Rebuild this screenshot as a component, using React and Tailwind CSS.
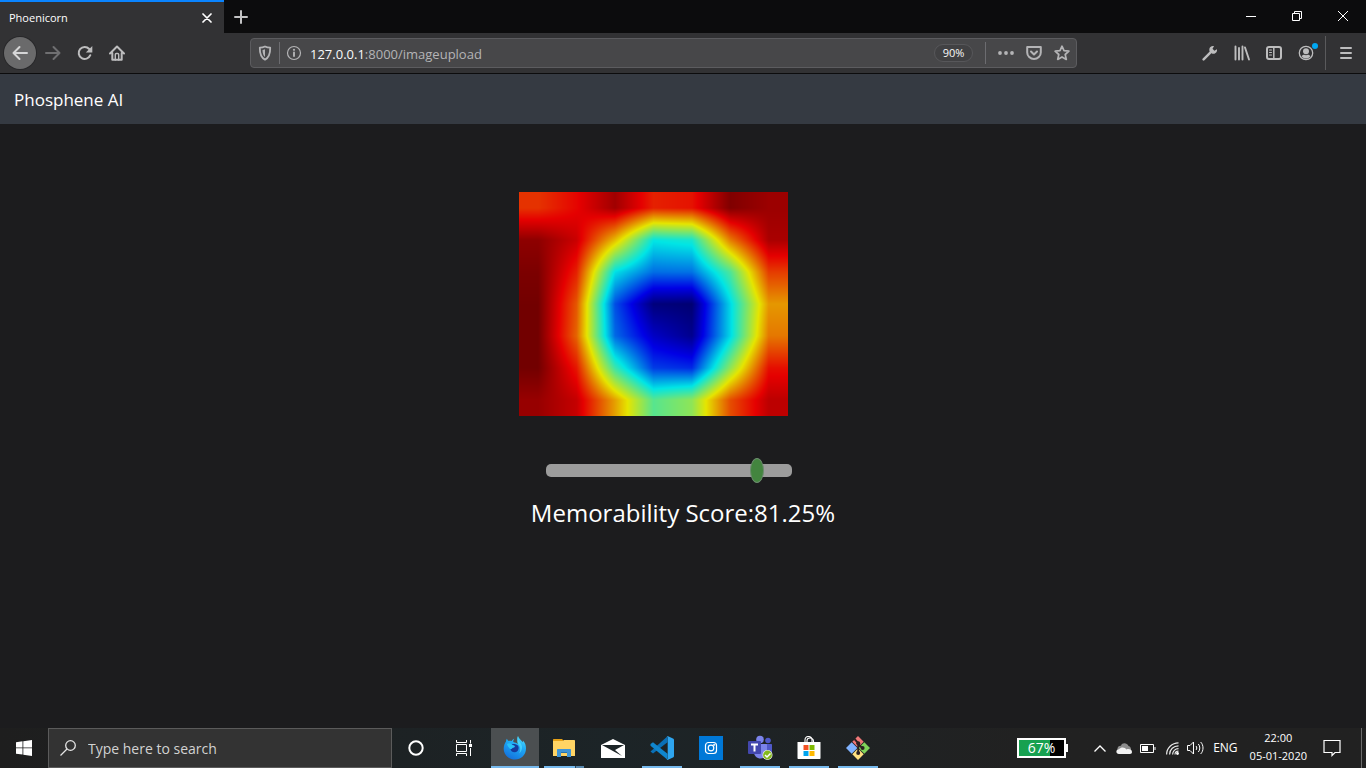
import { useEffect, useRef, useState } from "react";

const HEAT_GRID = [
  [0.82, 0.87, 0.95, 0.84, 0.855, 0.985, 0.955],
  [0.97, 0.905, 0.67, 0.38, 0.4, 0.74, 0.94],
  [0.99, 0.84, 0.37, 0.245, 0.25, 0.46, 0.81],
  [1, 0.78, 0.21, 0.01, 0, 0.36, 0.71],
  [1, 0.765, 0.24, 0.09, 0.03, 0.36, 0.745],
  [1, 0.85, 0.44, 0.19, 0.17, 0.53, 0.86],
  [0.96, 0.91, 0.7, 0.47, 0.53, 0.79, 0.92],
];

const clamp = (v, lo, hi) => Math.min(hi, Math.max(lo, v));

function jet(v) {
  const channel = (peak) => clamp(1.5 - Math.abs(4 * v - peak), 0, 1) * 229;
  return [channel(3), channel(2), channel(1)];
}

function Heatmap() {
  const ref = useRef(null);
  useEffect(() => {
    const canvas = ref.current;
    const ctx = canvas.getContext("2d");
    const { width, height } = canvas;
    const img = ctx.createImageData(width, height);
    for (let y = 0; y < height; y++) {
      const gy = clamp(((y + 0.5) * 7) / height - 0.5, 0, 6);
      const r = Math.min(5, Math.floor(gy));
      const fy = gy - r;
      for (let x = 0; x < width; x++) {
        const gx = clamp(((x + 0.5) * 7) / width - 0.5, 0, 6);
        const c = Math.min(5, Math.floor(gx));
        const fx = gx - c;
        const top = HEAT_GRID[r][c] * (1 - fx) + HEAT_GRID[r][c + 1] * fx;
        const bottom = HEAT_GRID[r + 1][c] * (1 - fx) + HEAT_GRID[r + 1][c + 1] * fx;
        const [R, G, B] = jet(top * (1 - fy) + bottom * fy);
        img.data.set([R, G, B, 255], (y * width + x) * 4);
      }
    }
    ctx.putImageData(img, 0, 0);
  }, []);
  return <canvas ref={ref} width={269} height={224} role="img" aria-label="Memorability heat map" className="block" />;
}

function Icon({ size = 16, children, className = "", box = 16, sw = 2 }) {
  return (
    <svg width={size} height={size} viewBox={`0 0 ${box} ${box}`} fill="none" stroke="currentColor" strokeWidth={sw} strokeLinecap="round" strokeLinejoin="round" className={`shrink-0 ${className}`} aria-hidden="true">
      {children}
    </svg>
  );
}

function ToolButton({ label, className = "", children }) {
  return (
    <button aria-label={label} className={`flex h-8 w-8 shrink-0 items-center justify-center ${className}`}>
      {children}
    </button>
  );
}

function TabStrip() {
  return (
    <div className="flex h-[33px] bg-[#0c0c0d] text-white">
      <div className="flex w-56 items-center justify-between border-t-2 border-[#0a84ff] bg-[#323234] pr-3 pl-[9px]">
        <span className="text-[11px] leading-4">Phoenicorn</span>
        <button aria-label="Close tab">
          <Icon size={10} box={10} sw={1.7}><path d="M1 1l8 8M9 1l-8 8" /></Icon>
        </button>
      </div>
      <button aria-label="New tab" className="flex w-[34px] items-center justify-center text-[#c3c3c4]">
        <Icon size={14} box={14}><path d="M7 1v12M1 7h12" /></Icon>
      </button>
      <div className="ml-auto flex pb-0.5">
        <button aria-label="Minimize" className="flex w-[46px] items-center justify-center">
          <svg width="10" height="10" stroke="currentColor"><path d="M0 5.5h10" /></svg>
        </button>
        <button aria-label="Restore" className="flex w-[46px] items-center justify-center">
          <svg width="10" height="10" fill="none" stroke="currentColor"><path d="M.5 2.5h7v7h-7zM2.500 2.500v-2h7v7h-2" /></svg>
        </button>
        <button aria-label="Close" className="flex w-[46px] items-center justify-center">
          <svg width="10" height="10" stroke="currentColor"><path d="M0 0l10 10M10 0L0 10" /></svg>
        </button>
      </div>
    </div>
  );
}

function AddressBar() {
  return (
    <div className="mx-[117px] flex h-[30px] min-w-0 flex-1 items-center rounded-sm border border-[#5c5c5f] bg-[#474749] text-[#b4b4b6]">
      <button aria-label="Tracking protection" className="flex w-7 shrink-0 justify-center">
        <Icon sw={1.8}>
          <path d="M8 1.500c1.800.9 3.500 1.200 5.200 1.200.1 5.500-.8 9.500-5.200 12C3.600 12.200 2.700 8.200 2.800 2.700c1.700 0 3.400-.3 5.200-1.200z" />
          <path d="M8 4.300c-.9.400-1.700.6-2.500.7.100 3.200.7 5.300 2.500 7z" fill="currentColor" stroke="none" />
        </Icon>
      </button>
      <span className="h-[22px] w-px bg-[#6c6c70]" />
      <button aria-label="Site information" className="flex w-7 shrink-0 justify-center">
        <Icon sw={1.2}>
          <circle cx="8" cy="8" r="6.5" />
          <path d="M8 7.500v3.500" strokeWidth="1.9" />
          <circle cx="8" cy="4.800" r="1.1" fill="currentColor" stroke="none" />
        </Icon>
      </button>
      <p className="ml-0.5 flex-1 truncate pt-0.5 text-[13px] leading-5"><span className="text-[#f9f9fa]">127.0.0.1</span>:8000/imageupload</p>
      <button className="h-[18px] w-[39px] rounded-full border border-[#57575a] bg-[#414143] text-[11px] leading-4 text-[#f9f9fa]">90%</button>
      <span className="ml-3 h-[22px] w-px bg-[#6c6c70]" />
      <button aria-label="Page actions" className="ml-1.5 flex w-7 justify-center">
        <Icon><g fill="currentColor" stroke="none"><circle cx="2" cy="8" r="1.9" /><circle cx="8" cy="8" r="1.9" /><circle cx="14" cy="8" r="1.9" /></g></Icon>
      </button>
      <button aria-label="Save to Pocket" className="flex w-7 justify-center">
        <Icon><path d="M1.200 2h13.600v5.500a6.800 6.500 0 0 1-13.600 0z" /><path d="M5 6.500l3 3 3-3" /></Icon>
      </button>
      <button aria-label="Bookmark this page" className="flex w-7 justify-center">
        <Icon sw={1.7}><path d="M8 1.200l2 4.500 4.900.5-3.700 3.300 1.100 4.900L8 11.900l-4.300 2.500 1.100-4.900L1.100 6.200 6 5.700z" /></Icon>
      </button>
    </div>
  );
}

function Toolbar() {
  return (
    <div className="flex h-[41px] items-center border-b border-[#0c0c0d] bg-[#323234] px-1 text-[#bdbdbe]">
      <ToolButton label="Back" className="rounded-full bg-[#6a6a6b] ring-1 ring-[#28282a] text-[#d6d6d7]">
        <Icon><path d="M15 8H1.500M7.500 2l-6 6 6 6" /></Icon>
      </ToolButton>
      <ToolButton label="Forward" className="ml-px text-[#6f6f71]">
        <Icon><path d="M1 8h13.500M8.500 2l6 6-6 6" /></Icon>
      </ToolButton>
      <ToolButton label="Reload">
        <Icon><path d="M13.300 10.200A6 6 0 1 1 12.200 4" /><path d="M15.300 1v6.500H8.800z" fill="currentColor" stroke="none" /></Icon>
      </ToolButton>
      <ToolButton label="Home">
        <Icon><path d="M1 8.500l7-7 7 7M3.300 8v6.700h9.400V8" /><path d="M6.300 15V9.500c0-.7.400-1 1-1h1.400c.6 0 1 .3 1 1V15" strokeWidth="1.4" /></Icon>
      </ToolButton>
      <AddressBar />
      <ToolButton label="Developer tools">
        <Icon>
          <path d="M1.600 14.400L8.800 7.200" strokeWidth="2.4" />
          <path d="M14.900 4.200l-2.500 1.500-1.900-1.900L12 1.200C10 .5 7.300 1.900 7.300 4.600c0 1.200.2 1.700.9 2.600.9.900 1.800 1.500 3.300 1.500 2.600 0 4-2.500 3.400-4.500z" fill="currentColor" stroke="none" />
        </Icon>
      </ToolButton>
      <ToolButton label="Library">
        <Icon><path d="M1.500 1.500v13M5 3v11.500M8.500 1.500v13M11 2.500l4 12" strokeWidth="1.9" /></Icon>
      </ToolButton>
      <ToolButton label="Sidebars">
        <Icon><rect x="1" y="2" width="14" height="12" rx="2" /><path d="M7.800 2v12" strokeWidth="1.5" /><path d="M3.500 5h2M3.500 7.500h2M3.500 10h2" strokeWidth="1.1" /></Icon>
      </ToolButton>
      <ToolButton label="Account" className="relative">
        <Icon>
          <circle cx="8" cy="8" r="6.7" strokeWidth="1.3" />
          <circle cx="8" cy="6.2" r="3" fill="currentColor" stroke="none" />
          <path d="M3.600 11.200c.8-1.200 1.800-1.400 2.600-1.400.9.600 2.700.6 3.600 0 .8 0 1.800.2 2.600 1.400-1.200 1.700-2.700 2.300-4.400 2.300s-3.200-.6-4.400-2.300z" fill="currentColor" stroke="none" />
        </Icon>
        <span className="absolute top-1.5 right-1 h-1.5 w-1.5 rounded-full bg-[#00a8f3]" />
      </ToolButton>
      <span className="mr-1 ml-[3px] h-[34px] w-px bg-[#5a5a5c]" />
      <ToolButton label="Menu">
        <Icon><path d="M3 3h10M3 8h10M3 13h10" /></Icon>
      </ToolButton>
    </div>
  );
}

function FirefoxLogo() {
  return (
    <svg width="24" height="24" viewBox="0 0 24 24" aria-hidden="true">
      <defs>
        <linearGradient id="fx" x1="0.8" y1="0" x2="0.3" y2="1">
          <stop offset="0" stopColor="#54e0fb" /><stop offset=".4" stopColor="#1eaaf5" /><stop offset="1" stopColor="#1470dc" />
        </linearGradient>
      </defs>
      <path d="M15 0c1 3 3.500 4.400 5 6.200 0-.6 0-1-.1-1.700 2.200 2.100 3.100 4.900 3.100 8C23 19 18 23.500 12 23.500S.7 19 .7 12.800C.7 10 1.600 7.500 3 5.500c0-1 .3-2 .9-2.800C4.300 3.800 5 4.600 5.800 5c1-.3 2-.2 3 0 .3-1 1.300-2 2.400-2.300-.8 1-1.100 2-.9 3.200 1.700.8 3.300.7 4.700 2-.7-2.600-1.600-5.400 0-7.900z" fill="url(#fx)" />
      <path d="M8.500 8.500c2-1 5-.3 6.600 1.300 1.400 2.600.2 6.200-3.200 6.500-2.700.1-4.500-1.800-4.400-3.800l3-.8c1.100-.2 1.700-.8 1.700-1.100-1.400-.3-2.600-.9-3.700-2.100z" fill="#173a9c" />
      <path d="M4 8c1.700-1.300 3.500-.8 5 .5 1 .9 2.500.8 3 1.600-.4 1-2.300 1.200-3.100 2.700-2 .8-4-1.800-4.900-4.800z" fill="#28c1f8" />
      <path d="M15 3c.8 2.500 3.500 4 4 7.500.3 3-1 5.500-3 7 2-3.500 1.500-7-1-9.500-1-1.500-.8-3 0-5z" fill="#5ce6ff" opacity=".6" />
    </svg>
  );
}

function FolderLogo() {
  return (
    <svg width="22" height="18" viewBox="0 0 22 18" aria-hidden="true">
      <path d="M0 1c0-.6.400-1 1-1h8l2 2H0z" fill="#e6a117" />
      <path d="M0 2h10l1-1h10c.6 0 1 .4 1 1v15H0z" fill="#ffd464" />
      <path d="M4 18v-7c0-.6.400-1 1-1h12c.6 0 1 .4 1 1v7h-4v-4H8v4z" fill="#3f95d6" />
      <path d="M8 13h6v1H8z" fill="#2872ab" />
    </svg>
  );
}

function VsCodeLogo() {
  return (
    <svg width="24" height="24" viewBox="0 0 24 24" aria-hidden="true">
      <path d="M.5 15.500L17.500.2v6L3 17.500z" fill="#0a70b7" />
      <path d="M.5 8L3 6.200l14.500 11.500v6L.5 9.700z" fill="#1086ce" />
      <path d="M17.500 0L23 2.500c.6.300 1 .8 1 1.500v16c0 .7-.4 1.200-1 1.500L17.500 24c-.5.100-1-.2-1.300-.5.700.5 1.500 0 1.500-.9V1.400c0-.9-.8-1.400-1.500-.9.300-.4.800-.6 1.300-.5z" fill="#2ea5ef" />
    </svg>
  );
}

function TeamsLogo() {
  return (
    <svg width="26" height="26" viewBox="0 0 26 26" aria-hidden="true">
      <circle cx="21" cy="5.500" r="2.8" fill="#5059c9" />
      <path d="M17 9h7c.6 0 1 .4 1 1v6c0 3-2 5-5 5h-3z" fill="#5059c9" />
      <circle cx="13" cy="4.500" r="3.8" fill="#7b83eb" />
      <path d="M8 9h11c.6 0 1 .4 1 1v7c0 4-3 6.500-6.500 6.500S7 21 7 17z" fill="#7b83eb" />
      <rect x="1" y="6" width="13" height="13" rx="1" fill="#4347ad" />
      <path d="M4 9.500h7M7.500 9.500v7" stroke="#fff" strokeWidth="2" />
      <circle cx="20.500" cy="20" r="5" fill="#f0f0f0" />
      <circle cx="20.500" cy="20" r="4.4" fill="#84b91d" />
      <path d="M18 20l2 2 3.500-3.500" fill="none" stroke="#fff" strokeWidth="1.5" />
    </svg>
  );
}

function StoreLogo() {
  return (
    <svg width="24" height="24" viewBox="0 0 24 24" aria-hidden="true">
      <path d="M8 7V4c0-2 1.500-3.500 3.500-3.500S15 2 15 4v3M10 7V4.500C10 3 11.500 2 13 2s3.500 1 3.500 3v2" fill="none" stroke="#fff" strokeWidth="1.1" />
      <path d="M.5 6h23v16c0 .6-.4 1-1 1h-21c-.6 0-1-.4-1-1z" fill="#fff" />
      <path d="M6.500 9h5v5h-5z" fill="#f25022" /><path d="M12.500 9h5v5h-5z" fill="#7fba00" />
      <path d="M6.500 15h5v5h-5z" fill="#00a4ef" /><path d="M12.500 15h5v5h-5z" fill="#ffb900" />
    </svg>
  );
}

function GitLogo() {
  return (
    <svg width="24" height="24" viewBox="0 0 24 24" aria-hidden="true">
      <path d="M12 0l5.700 5.700-5.700 5.700-5.700-5.700z" fill="#f07878" />
      <path d="M5.700 6.300l5.700 5.700-5.700 5.700L0 12z" fill="#80b3ff" />
      <path d="M18.300 6.300L24 12l-5.700 5.700-5.700-5.700z" fill="#80d35a" />
      <path d="M12 12.600l5.700 5.700L12 24l-5.700-5.700z" fill="#ffe080" />
      <path d="M8.500 3l3.700 4v10M12.200 8l4 4" stroke="#2a2020" strokeWidth="1.9" fill="none" />
      <circle cx="12.200" cy="7.300" r="2" fill="#2a2020" /><circle cx="16.600" cy="12" r="2" fill="#2a2020" /><circle cx="12.200" cy="17" r="2" fill="#2a2020" />
    </svg>
  );
}

function TaskButton({ label, open, active, grouped, children }) {
  return (
    <button aria-label={label} className={`flex w-12 shrink-0 flex-col items-center ${active ? "bg-[#4b4f51]" : ""}`}>
      <span className="flex flex-1 items-center pt-0.5">{children}</span>
      <span className={`flex h-0.5 justify-end ${active ? "w-full" : "w-10"} ${open ? "bg-[#76b9ed]" : ""}`}>
        {grouped && <span className="h-0.5 w-[9px] border-l border-[#2f4656] bg-[#5888ae]" />}
      </span>
    </button>
  );
}

function Taskbar() {
  return (
    <footer className="flex h-10 bg-linear-to-r from-[#1e1e1e] via-[#1c2427] via-45% to-[#212121] to-75% text-white">
      <button aria-label="Start" className="flex w-12 shrink-0 items-center justify-center">
        <svg width="16" height="16" viewBox="0 0 16 16" fill="currentColor" aria-hidden="true">
          <path d="M0 2.200L6.500 1.300v6.200H0zM7.300 1.200L16 0v7.500H7.300zM0 8.300h6.500v6.300L0 13.700zM7.300 8.300H16V16l-8.700-1.200z" />
        </svg>
      </button>
      <label className="flex w-[344px] min-w-0 items-center border border-[#5b5b5b] bg-[#333333] pl-[11px]">
        <svg width="16" height="16" fill="none" stroke="#e5e5e5" strokeWidth="1.3" aria-hidden="true">
          <circle cx="10.500" cy="5.500" r="4.8" /><path d="M7 9L.5 15.500" />
        </svg>
        <input type="text" aria-label="Search" placeholder="Type here to search" className="ml-3 min-w-0 flex-1 bg-transparent pt-0.5 text-sm outline-none placeholder:text-[#d2d2d2]" />
      </label>
      <TaskButton label="Cortana"><svg width="16" height="16" fill="none" stroke="#fff" strokeWidth="2" aria-hidden="true"><circle cx="8" cy="8" r="6.7" /></svg></TaskButton>
      <TaskButton label="Task View">
        <svg width="16" height="16" fill="none" stroke="#fff" aria-hidden="true">
          <path d="M.5 0v2.500h10V0M.5 4.500h10v7H.5zM.5 16v-2.500h10V16M14.500 0v3.500M14.500 8v8" />
          <path d="M13 4h3v3h-3z" fill="#fff" stroke="none" />
        </svg>
      </TaskButton>
      <div className="ml-[3px] flex gap-px">
        <TaskButton label="Firefox" open active><FirefoxLogo /></TaskButton>
        <TaskButton label="File Explorer" open grouped><FolderLogo /></TaskButton>
        <TaskButton label="Mail">
          <svg width="24" height="19" viewBox="0 0 24 19" aria-hidden="true"><path d="M0 6L12 0l12 6v13H0z" fill="#fff" /><path d="M1 6h22l-9 5 7 6z" fill="#1c2427" /></svg>
        </TaskButton>
        <TaskButton label="Visual Studio Code" open><VsCodeLogo /></TaskButton>
        <TaskButton label="Camera">
          <svg width="24" height="24" fill="none" stroke="#fff" strokeWidth="1.2" aria-hidden="true"><path d="M0 0h24v24H0z" fill="#0078d7" stroke="none" /><rect x="6.500" y="6.500" width="11" height="11" rx="3" /><circle cx="12" cy="12" r="2.8" /><circle cx="15.200" cy="8.800" r=".4" /></svg>
        </TaskButton>
        <TaskButton label="Teams" open><TeamsLogo /></TaskButton>
        <TaskButton label="Store" open><StoreLogo /></TaskButton>
        <TaskButton label="Git" open><GitLogo /></TaskButton>
      </div>
      <div className="ml-auto flex items-center">
        <div className="flex items-center">
          <span className="h-5 w-[49px] border-2 border-white bg-linear-to-r from-[#17a150] from-70% to-black to-70% text-center text-sm leading-4">67%</span>
          <span className="h-2 w-0.5 bg-white" />
        </div>
        <button aria-label="Show hidden icons" className="ml-[26px]"><svg width="12" height="7" fill="none" stroke="#fff" strokeWidth="1.3"><path d="M.5 6.500L6 1l5.500 5.500" /></svg></button>
        <svg className="ml-2.5" width="16" height="11" aria-hidden="true"><path d="M1.500 7C1 4 3 2.500 5 2.700 6-.5 11-.5 12.500 3c2 .5 2.500 2 2.500 4z" fill="#8d8d8d" /><path d="M3 11C-.5 11-.5 6.500 3 6.300 5 3.500 9 4 10.500 6.500 12 5.500 16 6 16 9c0 1-.7 2-2 2z" fill="#f2f2f2" /></svg>
        <svg className="ml-2" width="16" height="9" fill="none" stroke="#fff" aria-hidden="true"><path d="M.5.5h13v8H.5zM15 3v3" /><path d="M2 2h6v5H2z" fill="#fff" stroke="none" /></svg>
        <svg className="ml-2.5" width="13" height="13" fill="none" stroke="#e8e8e8" strokeWidth="1.2" aria-hidden="true"><path d="M.6 12.500C.6 6 6 .8 12.500.8M3.600 12.500c0-5 4-8.700 8.900-8.700M6.600 12.500c0-3.300 2.600-5.800 5.900-5.800" /><path d="M9 12.500c0-2 1.500-3.300 3.500-3.300" /><circle cx="11.500" cy="11.500" r="1.4" fill="#fff" stroke="none" /></svg>
        <svg className="ml-2" width="18" height="14" fill="none" stroke="#fff" aria-hidden="true"><path d="M.5 4.500h2.500L6.500 1v12L3 9.500H.5zM9 5c1 1 1 3 0 4M11.300 3c2 2 2 6 0 8M13.600 1c3.200 3 3.200 9 0 12" /></svg>
        <span className="ml-2 text-xs">ENG</span>
        <time dateTime="2020-01-05T22:00" className="ml-3 pb-0.5 text-center text-[11px] leading-[18px]">22:00<br />05-01-2020</time>
        <button aria-label="Notifications" className="ml-4"><svg width="18" height="18" fill="none" stroke="#fff" strokeWidth="1.2"><path d="M1 1.500h16v12h-5l-3 3v-3H1z" /></svg></button>
        <span className="mr-1 ml-5 h-10 w-px bg-[#6b6b6b]" />
      </div>
    </footer>
  );
}

export default function App() {
  const [score, setScore] = useState(88);
  return (
    <div className="flex min-h-screen flex-col bg-[#1c1c1e] font-['Open_Sans','Noto_Sans',sans-serif]">
      <header>
        <TabStrip />
        <Toolbar />
      </header>
      <nav className="flex h-[50px] items-center bg-[#353a42] px-3.5 pt-0.5 text-white">
        <a href="#home" className="text-[17px] leading-6">Phosphene AI</a>
      </nav>
      <main className="flex flex-1 flex-col items-center pt-[68px] text-white">
        <div className="pr-[59px]"><Heatmap /></div>
        <div className="mt-12 flex pr-7">
          <input
            type="range"
            min="0"
            max="100"
            value={score}
            onChange={(e) => setScore(Number(e.target.value))}
            aria-label="Memorability score"
            className="h-[13px] w-[246px] appearance-none rounded-[5px] bg-[#9c9c9c] outline-none [&::-webkit-slider-thumb]:h-[25px] [&::-webkit-slider-thumb]:w-3.5 [&::-webkit-slider-thumb]:appearance-none [&::-webkit-slider-thumb]:rounded-[50%] [&::-webkit-slider-thumb]:border [&::-webkit-slider-thumb]:border-[#6c8c6e] [&::-webkit-slider-thumb]:bg-[#43853f]"
          />
        </div>
        <h1 className="mt-5 text-2xl">Memorability Score:81.25%</h1>
      </main>
      <Taskbar />
    </div>
  );
}
